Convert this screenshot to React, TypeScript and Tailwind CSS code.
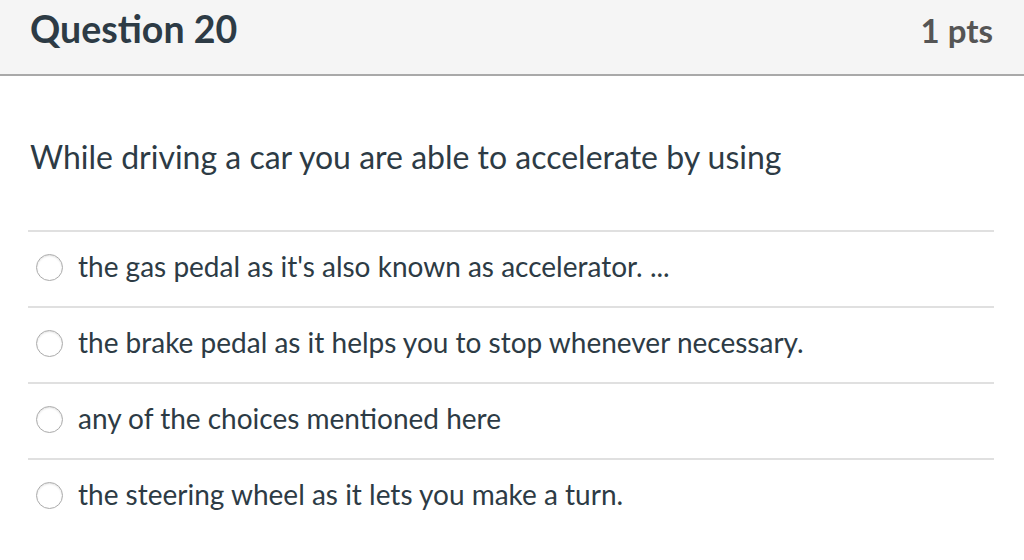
const answers = [
  "the gas pedal as it's also known as accelerator. ...",
  "the brake pedal as it helps you to stop whenever necessary.",
  "any of the choices mentioned here",
  "the steering wheel as it lets you make a turn.",
];

function Radio() {
  return (
    <span className="block w-[27px] h-[27px] -mt-[4px] rounded-full border border-[#ababab] bg-white shadow-[inset_0_1px_2px_rgba(0,0,0,0.12)] shrink-0" />
  );
}

export default function App() {
  return (
    <div className="w-[1024px] h-[560px] bg-white overflow-hidden font-['Lato','Noto_Sans',sans-serif]">
      <div className="h-[76px] bg-[#f5f5f5] border-b-2 border-[#a9a9a9] flex items-start justify-between pl-[30px] pr-[31px]">
        <h2 className="mt-[10px] text-[37.5px] font-bold text-[#2d3b45] leading-none">Question 20</h2>
        <span className="mt-[14px] text-[33px] font-bold text-[#555] leading-none">1 pts</span>
      </div>

      <p className="mt-[63px] px-[30px] text-[32px] leading-[36px] text-[#2d3b45]">
        While driving a car you are able to accelerate by using
      </p>

      <div className="mt-[55px] ml-[28px] mr-[30px]">
        {answers.map((a) => (
          <div key={a} className="h-[76px] border-t-2 border-[#e0e0e0] flex items-center pl-[8px] gap-[15px]">
            <Radio />
            <span className="-mt-[7px] text-[28px] text-[#2d3b45] leading-none">{a}</span>
          </div>
        ))}
      </div>
    </div>
  );
}
